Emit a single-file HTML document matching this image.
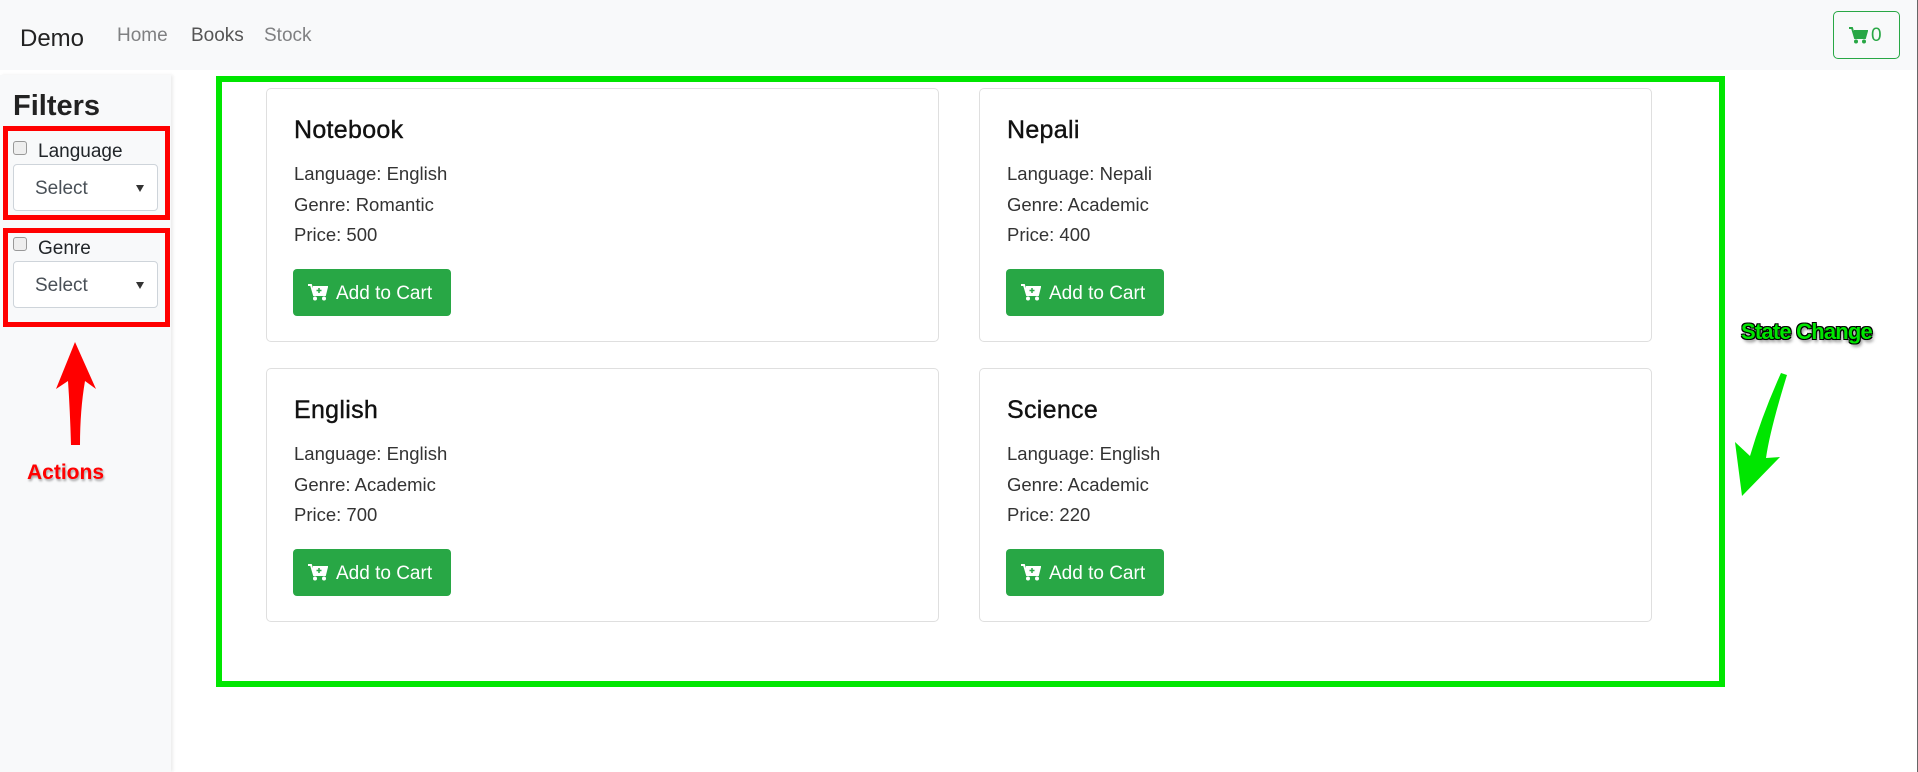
<!DOCTYPE html>
<html><head><meta charset="utf-8"><style>
*{box-sizing:border-box;margin:0;padding:0}
body{width:1918px;height:772px;background:#fff;font-family:"Liberation Sans",sans-serif;color:#212529;position:relative;overflow:hidden}
.abs{position:absolute}
.nav{left:0;top:0;width:1918px;height:70px;background:#f8f9fa}
.nav a{position:absolute;top:25px;font-size:19px;color:#7f8082;text-decoration:none}
.side{left:0;top:75px;width:171px;height:697px;background:#f8f9fa;box-shadow:2px 0 3px rgba(0,0,0,.08)}
.red{border:5px solid #f00;left:3px;width:167px}
.cb{width:14px;height:14px;border:1px solid #999;border-radius:3px;background:#eee}
.sel{left:13px;width:145px;height:47px;border:1px solid #ced4da;border-radius:4px;background:#fff;font-size:19px;color:#495057;padding:13px 0 0 21px}
.sel:after{content:"";position:absolute;right:13px;top:20px;border-left:4px solid transparent;border-right:4px solid transparent;border-top:7px solid #333}
.card{width:673px;height:254px;border:1px solid #dfdfdf;border-radius:5px;background:#fff}
.card h5{position:absolute;left:27px;top:27px;font-size:25px;font-weight:normal;color:#111;letter-spacing:.3px;-webkit-text-stroke:.4px #111}
.card p{position:absolute;left:27px;top:70px;font-size:18.5px;line-height:30.5px;color:#333}
.btn{position:absolute;left:26px;top:180px;width:158px;height:47px;background:#28a745;border-radius:4px;color:#fff;font-size:19px;padding:14px 0 0 43px}
.btn svg{position:absolute;left:15px;top:15px}
</style></head><body>
<div class="abs nav">
<div class="abs" style="left:20px;top:25px;font-size:24px;color:#222">Demo</div>
<a style="left:117px">Home</a><a style="left:191px;color:#555">Books</a><a style="left:264px">Stock</a>
<div class="abs" style="left:1833px;top:11px;width:67px;height:48px;border:1px solid #28a745;border-radius:5px;color:#28a745;font-size:19px;padding:13px 0 0 37px">0
<svg class="abs" style="left:15px;top:15px" width="19" height="17" viewBox="0 0 19 17"><path d="M0 1h3l3 10h10l2-7H5" fill="none" stroke="#28a745" stroke-width="2"/><rect x="5" y="4" width="12" height="6" fill="#28a745"/><circle cx="7" cy="14.5" r="2" fill="#28a745"/><circle cx="15" cy="14.5" r="2" fill="#28a745"/></svg></div>
</div>
<div class="abs" style="left:1917px;top:0;width:1px;height:772px;background:#666"></div>
<div class="abs side">
<div class="abs" style="left:13px;top:15px;font-size:29px;font-weight:bold;color:#222">Filters</div>
</div>
<div class="abs red" style="top:126px;height:94px"></div>
<div class="abs cb" style="left:13px;top:141px"></div>
<div class="abs" style="left:38px;top:141px;font-size:19px">Language</div>
<div class="abs sel" style="top:164px">Select</div>
<div class="abs red" style="top:228px;height:99px"></div>
<div class="abs cb" style="left:13px;top:237px"></div>
<div class="abs" style="left:38px;top:238px;font-size:19px">Genre</div>
<div class="abs sel" style="top:261px">Select</div>
<svg class="abs" style="left:40px;top:335px" width="70" height="115"><path d="M35 7 L56 54 L45 46 Q40 75 40 110 L31 110 Q30 75 28 46 L16 54 Z" fill="#f00"/></svg>
<div class="abs" style="left:27px;top:461px;font-size:21px;font-weight:bold;color:#f00;text-shadow:1px 2px 2px rgba(0,0,0,.35)">Actions</div>
<div class="abs" style="left:216px;top:76px;width:1509px;height:611px;border:6px solid #00e600"></div>

<div class="abs card" style="left:266px;top:88px"><h5>Notebook</h5><p>Language: English<br>Genre: Romantic<br>Price: 500</p><div class="btn"><svg width="20" height="17" viewBox="0 0 20 17"><path d="M0 1h3l3 10h11l2-8H5" fill="none" stroke="#fff" stroke-width="2"/><rect x="5" y="3" width="13" height="7" fill="#fff"/><path d="M11 4v5M8.5 6.5h5" stroke="#28a745" stroke-width="1.5"/><circle cx="7" cy="14.5" r="2" fill="#fff"/><circle cx="16" cy="14.5" r="2" fill="#fff"/></svg>Add to Cart</div></div>
<div class="abs card" style="left:979px;top:88px"><h5>Nepali</h5><p>Language: Nepali<br>Genre: Academic<br>Price: 400</p><div class="btn"><svg width="20" height="17" viewBox="0 0 20 17"><path d="M0 1h3l3 10h11l2-8H5" fill="none" stroke="#fff" stroke-width="2"/><rect x="5" y="3" width="13" height="7" fill="#fff"/><path d="M11 4v5M8.5 6.5h5" stroke="#28a745" stroke-width="1.5"/><circle cx="7" cy="14.5" r="2" fill="#fff"/><circle cx="16" cy="14.5" r="2" fill="#fff"/></svg>Add to Cart</div></div>
<div class="abs card" style="left:266px;top:368px"><h5>English</h5><p>Language: English<br>Genre: Academic<br>Price: 700</p><div class="btn"><svg width="20" height="17" viewBox="0 0 20 17"><path d="M0 1h3l3 10h11l2-8H5" fill="none" stroke="#fff" stroke-width="2"/><rect x="5" y="3" width="13" height="7" fill="#fff"/><path d="M11 4v5M8.5 6.5h5" stroke="#28a745" stroke-width="1.5"/><circle cx="7" cy="14.5" r="2" fill="#fff"/><circle cx="16" cy="14.5" r="2" fill="#fff"/></svg>Add to Cart</div></div>
<div class="abs card" style="left:979px;top:368px"><h5>Science</h5><p>Language: English<br>Genre: Academic<br>Price: 220</p><div class="btn"><svg width="20" height="17" viewBox="0 0 20 17"><path d="M0 1h3l3 10h11l2-8H5" fill="none" stroke="#fff" stroke-width="2"/><rect x="5" y="3" width="13" height="7" fill="#fff"/><path d="M11 4v5M8.5 6.5h5" stroke="#28a745" stroke-width="1.5"/><circle cx="7" cy="14.5" r="2" fill="#fff"/><circle cx="16" cy="14.5" r="2" fill="#fff"/></svg>Add to Cart</div></div>

<div class="abs" style="left:1741px;top:319px;font-size:22px;font-weight:bold;color:#00e600;letter-spacing:-.8px;text-shadow:-1px -1px 0 #000,1px -1px 0 #000,-1px 1px 0 #000,1px 1px 0 #000,2px 3px 3px rgba(0,0,0,.5)">State Change</div>
<svg class="abs" style="left:1730px;top:370px" width="70" height="130"><path d="M51 3 L57 5 Q40 60 36 88 L50 87 L12 126 L5 72 L20 86 Q32 45 51 3 Z" fill="#00e600"/></svg>
</body></html>
